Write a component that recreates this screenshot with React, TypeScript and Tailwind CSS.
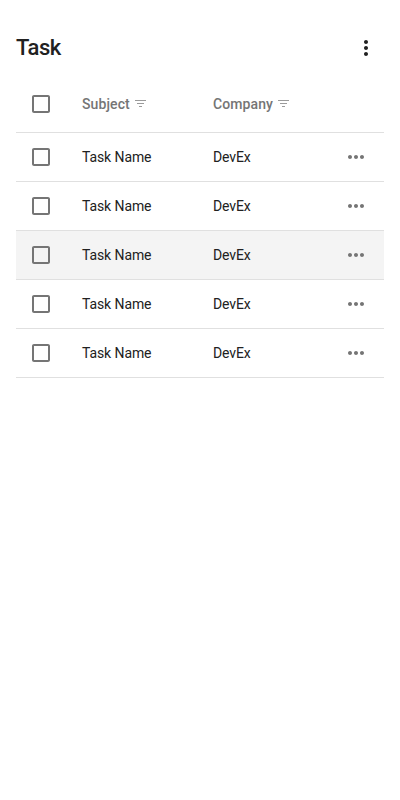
import React from "react";

function Checkbox() {
  return (
    <svg width="24" height="24" viewBox="0 0 24 24" className="block text-[#757575]" fill="currentColor">
      <path d="M19 5v14H5V5h14m0-2H5c-1.1 0-2 .9-2 2v14c0 1.1.9 2 2 2h14c1.1 0 2-.9 2-2V5c0-1.1-.9-2-2-2z" />
    </svg>
  );
}

function FilterIcon() {
  return (
    <svg width="12" height="12" viewBox="0 0 12 12" className="block" fill="none" stroke="#9b9b9b" strokeWidth="1">
      <path d="M0 2.5h11M2 5.5h7M4 8.5h3" />
    </svg>
  );
}

const columns = "grid grid-cols-[66px_131px_1fr_56px] items-center border-b border-[#e0e0e0]";

const rows = [
  { subject: "Task Name", company: "DevEx", active: false },
  { subject: "Task Name", company: "DevEx", active: false },
  { subject: "Task Name", company: "DevEx", active: true },
  { subject: "Task Name", company: "DevEx", active: false },
  { subject: "Task Name", company: "DevEx", active: false },
];

export default function App() {
  return (
    <div className="min-h-screen bg-white px-4 pt-5 font-['Roboto',sans-serif] text-sm text-[#212121]">
      <header className="flex h-14 items-center justify-between pr-1.5">
        <h1 className="text-[22px] font-medium leading-7 tracking-[-0.45px]">Task</h1>
        <button aria-label="More options">
          <svg width="24" height="24" viewBox="0 0 24 24" className="block" fill="currentColor">
            <path d="M12 8c1.1 0 2-.9 2-2s-.9-2-2-2-2 .9-2 2 .9 2 2 2zm0 2c-1.1 0-2 .9-2 2s.9 2 2 2 2-.9 2-2-.9-2-2-2zm0 6c-1.1 0-2 .9-2 2s.9 2 2 2 2-.9 2-2-.9-2-2-2z" />
          </svg>
        </button>
      </header>
      <div className={`${columns} h-[57px] font-medium tracking-[0.1px] text-[#757575]`}>
        <div className="pl-[13px]"><Checkbox /></div>
        <div className="flex items-center gap-1">
          <span className="w-[49px]">Subject</span>
          <FilterIcon />
        </div>
        <div className="flex items-center gap-1">
          <span className="w-[61px]">Company</span>
          <FilterIcon />
        </div>
      </div>
      {rows.map((row, i) => (
        <div key={i} className={`${columns} h-[49px] tracking-[-0.1px] ${row.active ? "bg-[#f4f4f4]" : ""}`}>
          <div className="pl-[13px]"><Checkbox /></div>
          <div>{row.subject}</div>
          <div>{row.company}</div>
          <button aria-label="Row actions" className="pl-4 text-[#757575]">
            <svg width="24" height="24" viewBox="0 0 24 24" className="block" fill="currentColor">
              <path d="M6 10c-1.1 0-2 .9-2 2s.9 2 2 2 2-.9 2-2-.9-2-2-2zm12 0c-1.1 0-2 .9-2 2s.9 2 2 2 2-.9 2-2-.9-2-2-2zm-6 0c-1.1 0-2 .9-2 2s.9 2 2 2 2-.9 2-2-.9-2-2-2z" />
            </svg>
          </button>
        </div>
      ))}
    </div>
  );
}
